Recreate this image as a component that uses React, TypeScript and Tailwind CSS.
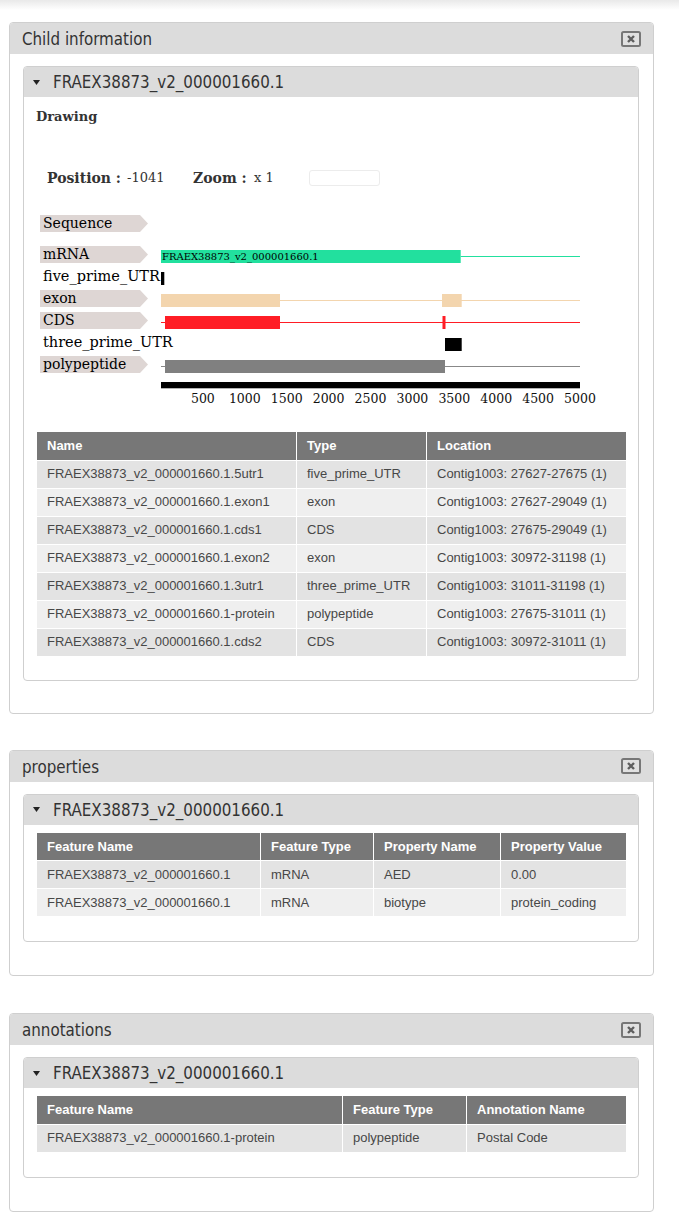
import React from "react";

const headFont =
  "font-['DejaVu_Sans_Condensed','DejaVu_Sans',sans-serif] [font-stretch:condensed]";
const tableFont = "font-['Liberation_Sans',Arial,sans-serif]";
const serif = "font-['DejaVu_Serif','Liberation_Serif',serif]";

function CloseIcon() {
  return (
    <svg width="20" height="16" viewBox="0 0 20 16">
      <rect x="1" y="1" width="18" height="14" rx="1.5" fill="#e0e0e0" stroke="#777" strokeWidth="2" />
      <path d="M7 5 L13 11 M13 5 L7 11" stroke="#5e5e5e" strokeWidth="2.4" />
    </svg>
  );
}

function Triangle() {
  return (
    <svg width="7" height="5" viewBox="0 0 7 5">
      <polygon points="0,0 7,0 3.5,5" fill="#222" />
    </svg>
  );
}

function Panel({
  title,
  children,
  tight,
}: {
  title: string;
  children: React.ReactNode;
  tight?: boolean;
}) {
  return (
    <div className="ml-[9px] w-[645px] border border-[#cfcfcf] rounded-[4px] bg-white">
      <div className="h-[31px] bg-[#dcdcdc] rounded-t-[3px] flex items-center justify-between pl-[12px] pr-[12px]">
        <span className={`${headFont} pt-[3px] text-[16.8px] text-[#333]`}>{title}</span>
        <CloseIcon />
      </div>
      <div className={`pt-[12px] pl-[13px] pr-[14px] ${tight ? "pb-[32px]" : "pb-[33px]"}`}>{children}</div>
    </div>
  );
}

function SubPanel({ children, tight }: { children: React.ReactNode; tight?: boolean }) {
  return (
    <div className="border border-[#cfcfcf] rounded-[4px] bg-white">
      <div className="h-[30px] bg-[#dcdcdc] rounded-t-[3px] flex items-center pl-[9px]">
        <Triangle />
        <span className={`${headFont} ml-[13px] pt-[2px] text-[16.8px] text-[#333]`}>
          FRAEX38873_v2_000001660.1
        </span>
      </div>
      <div className={`pt-[8px] px-[12px] ${tight ? "pb-[23px]" : "pb-[24px]"}`}>{children}</div>
    </div>
  );
}

function DataTable({ cols, rows }: { cols: { name: string; w: number }[]; rows: string[][] }) {
  return (
    <table className={`${tableFont} w-[590px] table-fixed border-collapse text-[13px]`}>
      <colgroup>
        {cols.map((c, i) => (
          <col key={i} style={{ width: c.w }} />
        ))}
      </colgroup>
      <thead>
        <tr>
          {cols.map((c, i) => (
            <th
              key={i}
              className="h-[28px] bg-[#777777] text-white font-bold text-left pl-[10px] p-0 border border-white border-t-0"
            >
              {c.name}
            </th>
          ))}
        </tr>
      </thead>
      <tbody>
        {rows.map((r, ri) => (
          <tr key={ri} className={ri % 2 === 0 ? "bg-[#e3e3e3]" : "bg-[#efefef]"}>
            {r.map((cell, ci) => (
              <td key={ci} className="h-[28px] pl-[10px] p-0 text-[#474747] border border-white whitespace-nowrap">
                {cell}
              </td>
            ))}
          </tr>
        ))}
      </tbody>
    </table>
  );
}

const labelBox =
  "w-[108px] h-[17px] bg-[#ded6d4] pl-[3px] text-[14px] leading-[17px] text-black [clip-path:polygon(0_0,100px_0,108px_50%,100px_100%,0_100%)]";
const labelPlain = "w-[108px] h-[17px] pl-[3px] text-[14.5px] leading-[17px] text-black whitespace-nowrap";

function TrackRow({
  label,
  plain,
  tall,
  children,
}: {
  label: string;
  plain?: boolean;
  tall?: boolean;
  children?: React.ReactNode;
}) {
  return (
    <div className={`flex pl-[4px] ${tall ? "h-[31px]" : "h-[22px]"}`}>
      <div className={plain ? labelPlain : labelBox}>{label}</div>
      <svg className="ml-[13px] shrink-0" width="419" height="22" viewBox="0 0 419 22">
        {children}
      </svg>
    </div>
  );
}

function Drawing() {
  const ticks = [500, 1000, 1500, 2000, 2500, 3000, 3500, 4000, 4500, 5000];
  return (
    <div className={`${serif}`}>
      <div className="h-[24px] flex items-center text-[13px] font-bold text-[#333]">Drawing</div>
      <div className="mt-[39px] h-[20px] flex items-center pl-[11px] text-[#333]">
        <span className="w-[80px] font-bold text-[14px] whitespace-nowrap">Position :</span>
        <span className="w-[66px] text-[13px]">-1041</span>
        <span className="w-[61px] font-bold text-[14px] whitespace-nowrap">Zoom :</span>
        <span className="w-[55px] text-[13px]">x 1</span>
        <div className="w-[71px] h-[16px] border border-[#ececec] rounded-[3px]" />
      </div>
      <div className="mt-[27px]">
        <TrackRow label="Sequence" tall />
        <TrackRow label="mRNA">
          <rect x="0" y="4" width="299.7" height="13" fill="#22e09e" />
          <line x1="299.7" y1="10.5" x2="419" y2="10.5" stroke="#22e09e" strokeWidth="1.2" />
          <text x="1" y="14" fontSize="10" fill="#000" fontFamily="DejaVu Serif, serif">
            FRAEX38873_v2_000001660.1
          </text>
        </TrackRow>
        <TrackRow label="five_prime_UTR" plain>
          <rect x="0" y="4" width="3.3" height="13" fill="#000" />
        </TrackRow>
        <TrackRow label="exon">
          <line x1="0" y1="10.5" x2="419" y2="10.5" stroke="#f3d5ae" strokeWidth="1.2" />
          <rect x="0" y="4" width="119" height="13" fill="#f3d5ae" />
          <rect x="281" y="4" width="19.7" height="13" fill="#f3d5ae" />
        </TrackRow>
        <TrackRow label="CDS">
          <line x1="0" y1="10.5" x2="419" y2="10.5" stroke="#ff1d25" strokeWidth="1.2" />
          <rect x="4" y="4" width="115" height="13" fill="#ff1d25" />
          <rect x="281.5" y="4" width="3" height="13" fill="#ff1d25" />
        </TrackRow>
        <TrackRow label="three_prime_UTR" plain>
          <rect x="284" y="4" width="16.7" height="13" fill="#000" />
        </TrackRow>
        <TrackRow label="polypeptide">
          <line x1="0" y1="10.5" x2="419" y2="10.5" stroke="#888" strokeWidth="1.2" />
          <rect x="4" y="4" width="280" height="13" fill="#808080" />
        </TrackRow>
      </div>
      <svg className="mt-[4px] ml-[125px] block" width="445" height="28" viewBox="0 0 445 28">
        <rect x="0" y="0" width="419" height="6.3" fill="#000" />
        {ticks.map((t, i) => (
          <text
            key={t}
            x={41.9 * (i + 1)}
            y="21"
            fontSize="12.5"
            textAnchor="middle"
            fill="#111"
            fontFamily="DejaVu Serif, serif"
          >
            {t}
          </text>
        ))}
      </svg>
    </div>
  );
}

export default function App() {
  return (
    <div className="w-[679px] bg-white min-h-[1222px]">
      <div className="h-[10px] bg-linear-to-b from-[#e9e9e9] to-white" />
      <div className="mt-[12px]">
        <Panel title="Child information" tight>
          <SubPanel tight>
            <Drawing />
            <div className="mt-[22px]">
              <DataTable
                cols={[
                  { name: "Name", w: 260 },
                  { name: "Type", w: 130 },
                  { name: "Location", w: 200 },
                ]}
                rows={[
                  ["FRAEX38873_v2_000001660.1.5utr1", "five_prime_UTR", "Contig1003: 27627-27675 (1)"],
                  ["FRAEX38873_v2_000001660.1.exon1", "exon", "Contig1003: 27627-29049 (1)"],
                  ["FRAEX38873_v2_000001660.1.cds1", "CDS", "Contig1003: 27675-29049 (1)"],
                  ["FRAEX38873_v2_000001660.1.exon2", "exon", "Contig1003: 30972-31198 (1)"],
                  ["FRAEX38873_v2_000001660.1.3utr1", "three_prime_UTR", "Contig1003: 31011-31198 (1)"],
                  ["FRAEX38873_v2_000001660.1-protein", "polypeptide", "Contig1003: 27675-31011 (1)"],
                  ["FRAEX38873_v2_000001660.1.cds2", "CDS", "Contig1003: 30972-31011 (1)"],
                ]}
              />
            </div>
          </SubPanel>
        </Panel>
      </div>
      <div className="mt-[36px]">
        <Panel title="properties">
          <SubPanel>
            <DataTable
              cols={[
                { name: "Feature Name", w: 224 },
                { name: "Feature Type", w: 113 },
                { name: "Property Name", w: 127 },
                { name: "Property Value", w: 126 },
              ]}
              rows={[
                ["FRAEX38873_v2_000001660.1", "mRNA", "AED", "0.00"],
                ["FRAEX38873_v2_000001660.1", "mRNA", "biotype", "protein_coding"],
              ]}
            />
          </SubPanel>
        </Panel>
      </div>
      <div className="mt-[37px]">
        <Panel title="annotations">
          <SubPanel>
            <DataTable
              cols={[
                { name: "Feature Name", w: 306 },
                { name: "Feature Type", w: 124 },
                { name: "Annotation Name", w: 160 },
              ]}
              rows={[["FRAEX38873_v2_000001660.1-protein", "polypeptide", "Postal Code"]]}
            />
          </SubPanel>
        </Panel>
      </div>
    </div>
  );
}
